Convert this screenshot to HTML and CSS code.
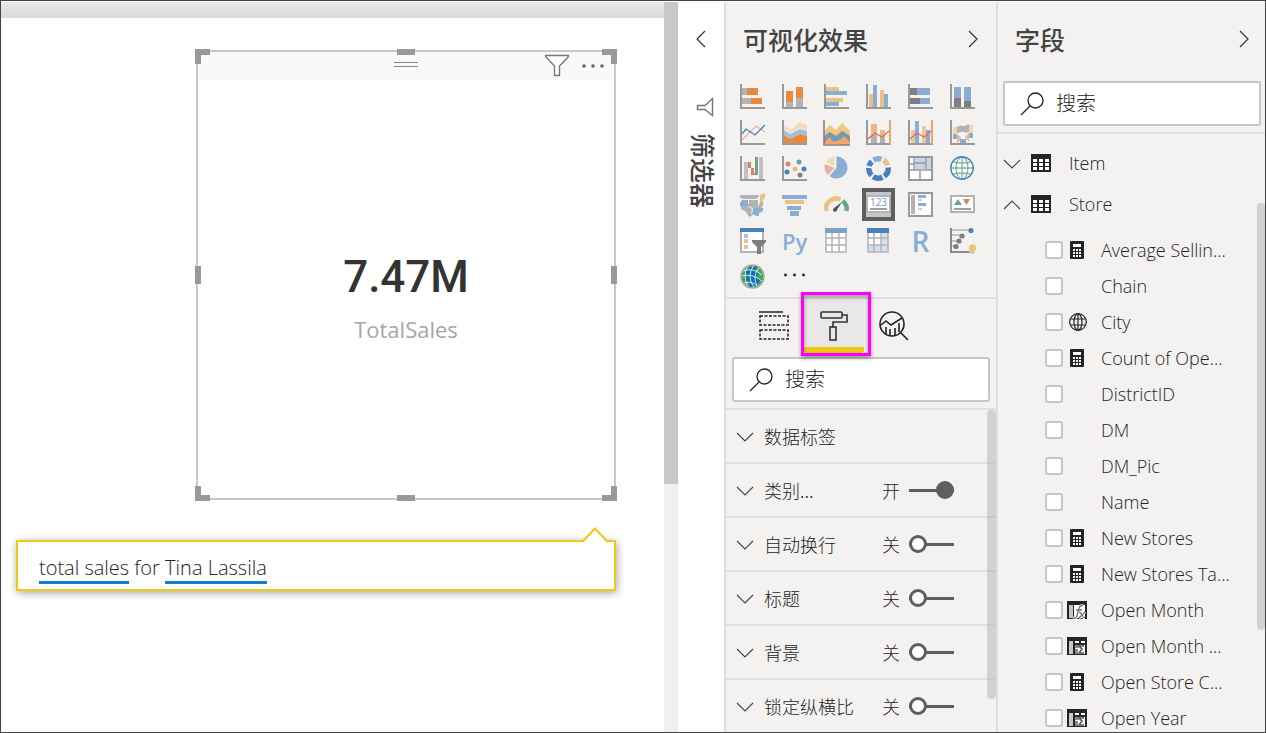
FILE: index.html
```html
<!DOCTYPE html>
<html lang="zh-CN">
<head>
<meta charset="utf-8">
<title>TotalSales</title>
<link rel="stylesheet" href="styles.css">
</head>
<body>
<svg class="defs" aria-hidden="true">
  <symbol id="axis" viewBox="0 0 25 25"><path d="M1 0V24H25" fill="none" stroke="#999" stroke-width="2"/></symbol>
  <symbol id="down" viewBox="0 0 18 18"><path d="M1 6l8 8 8-8" fill="none" stroke="#444" stroke-width="1.1"/></symbol>
  <symbol id="up" viewBox="0 0 18 18"><path d="M1 14l8-8 8 8" fill="none" stroke="#444" stroke-width="1.1"/></symbol>
  <symbol id="right" viewBox="0 0 10 18"><path d="M1 1l8 8-8 8" fill="none" stroke="#333" stroke-width="1.2"/></symbol>
  <symbol id="left" viewBox="0 0 10 18"><path d="M9 1L1 9l8 8" fill="none" stroke="#333" stroke-width="1.2"/></symbol>
  <symbol id="search" viewBox="0 0 24 24"><circle cx="15.500" cy="8.500" r="7.500" fill="none" stroke="#222" stroke-width="1.300"/><path d="M10 14L1 23" stroke="#222" stroke-width="1.300"/></symbol>
  <symbol id="table" viewBox="0 0 20 18"><path d="M0 0h20v18H0z" fill="#252423"/><path d="M2 5h4v3H2zM8 5h4v3H8zM14 5h4v3h-4zM2 9h4v3H2zM8 9h4v3H8zM14 9h4v3h-4zM2 13h4v3H2zM8 13h4v3H8zM14 13h4v3h-4z" fill="#fff"/></symbol>
  <symbol id="calc" viewBox="0 0 20 18"><rect x="3" width="14" height="18" rx="1" fill="#252423"/><path d="M6 3h8v3H6zM6 8h2v2H6zM9 8h2v2H9zM12 8h2v2h-2zM6 11h2v2H6zM9 11h2v2H9zM12 11h2v2h-2zM6 14h2v2H6zM9 14h2v2H9zM12 14h2v2h-2z" fill="#fff"/></symbol>
  <symbol id="globe" viewBox="0 0 20 18"><g fill="none" stroke="#252423" stroke-width="1.200"><circle cx="11" cy="9" r="8.300"/><ellipse cx="11" cy="9" rx="4" ry="8.300"/><path d="M11 1v16M4 6h14M4 12h14"/></g></symbol>
  <symbol id="fx" viewBox="0 0 20 18"><path d="M0 0h20v18H0z" fill="#252423"/><path d="M2 4h4v13H2z" fill="#c8c6c4"/><path d="M7 4h11v13H7z" fill="#fff"/><path d="M6 17c3 1 4-1 5-6s2-7 5-6M9 9h6M12 11c3 0 3 6 6 6M18 11l-6 6" fill="none" stroke="#fff" stroke-width="3"/><path d="M6 17c3 1 4-1 5-6s2-7 5-6M9 9h6M12 11c3 0 3 6 6 6M18 11l-6 6" fill="none" stroke="#777" stroke-width="1.300"/></symbol>
  <symbol id="sum" viewBox="0 0 20 18"><path d="M0 0h20v18H0z" fill="#252423"/><path d="M2 4h4v13H2z" fill="#c8c6c4"/><path d="M8 4h4v2H8zM14 4h4v2h-4zM8 8h10v9H8z" fill="#fff"/><path d="M8 8h4v3H8zM8 12h3v5H8z" fill="#8a8886"/><path d="M17 9h-5l3 3-3 4h5" fill="none" stroke="#555" stroke-width="1.500"/></symbol>
</svg>
<div class="app">
  <main class="report">
    <div class="ribbon"></div>
    <div class="page">
      <section class="visual" aria-label="TotalSales">
        <div class="visual-head">
          <svg class="grip" viewBox="0 0 24 6"><path d="M0 1.500h24M0 5.500h24" stroke="#8a8886"/></svg>
          <div class="visual-tools">
            <button class="plain" aria-label="筛选器"><svg width="26" height="24" viewBox="0 0 26 24"><path d="M1.500 1.500h23v1L15.500 12v9.500h-5V12L1.500 2.500z" fill="#fff" stroke="#777" stroke-width="1.400"/></svg></button>
            <button class="plain" aria-label="更多选项"><svg width="22" height="4" viewBox="0 0 22 4"><g fill="#666"><circle cx="2" cy="2" r="1.800"/><circle cx="11" cy="2" r="1.800"/><circle cx="20" cy="2" r="1.800"/></g></svg></button>
          </div>
        </div>
        <div class="card">
          <div class="card-value">7.47M</div>
          <div class="card-label">TotalSales</div>
        </div>
        <i class="handle corner tl"></i><i class="handle corner tr"></i><i class="handle corner bl"></i><i class="handle corner br"></i>
        <i class="handle t"></i><i class="handle b"></i><i class="handle l"></i><i class="handle r"></i>
      </section>
      <div class="question">
        <span class="term">total sales</span> for <span class="term">Tina Lassila</span>
        <svg class="pointer" viewBox="0 0 28 16"><path d="M2 16L14 2l12 14z" fill="#fff"/><path d="M1 14h1L14 1.500 26 14h1" fill="none" stroke="#f2c811" stroke-width="2"/></svg>
      </div>
    </div>
  </main>
  <div class="page-scroll"><div class="page-thumb"></div></div>

  <aside class="filters">
    <button class="plain" aria-label="展开"><svg width="10" height="18"><use href="#left"/></svg></button>
    <svg class="funnel" width="18" height="20" viewBox="0 0 18 20"><path d="M16.500 1.500v17L9 12.500H1.500v-4H9z" fill="none" stroke="#777" stroke-width="1.400"/></svg>
    <h2 class="filters-title">筛选器</h2>
  </aside>

  <aside class="pane viz">
    <header class="pane-head"><h2>可视化效果</h2><button class="plain" aria-label="折叠"><svg width="10" height="18"><use href="#right"/></svg></button></header>
    <div class="gallery">
      <button aria-label="堆积条形图"><svg viewBox="0 0 25 25"><path d="M2 4h5v7H2zM2 14h9v6H2z" fill="#b3b3b3"/><path d="M7 4h11v7H7zM11 14h11v6H11z" fill="#e68a41"/><use href="#axis"/></svg></button>
      <button aria-label="堆积柱形图"><svg viewBox="0 0 25 25"><path d="M4 18h7v5H4zM14 14h7v9h-7z" fill="#b3b3b3"/><path d="M4 7h7v11H4zM14 3h7v11h-7z" fill="#e68a41"/><use href="#axis"/></svg></button>
      <button aria-label="簇状条形图"><svg viewBox="0 0 25 25"><path d="M2 3h13v4H2zM2 14h17v4H2z" fill="#eac282"/><path d="M2 7h21v4H2zM2 18h13v4H2z" fill="#8aadd3"/><use href="#axis"/></svg></button>
      <button aria-label="簇状柱形图"><svg viewBox="0 0 25 25"><path d="M3 10h4v13H3zM14 6h4v17h-4z" fill="#eac282"/><path d="M7 1h4v22H7zM18 10h4v13h-4z" fill="#8aadd3"/><use href="#axis"/></svg></button>
      <button aria-label="百分比堆积条形图"><svg viewBox="0 0 25 25"><path d="M2 4h7v7H2zM2 14h10v6H2z" fill="#7f7f7f"/><path d="M9 4h13v7H9zM12 14h10v6H12z" fill="#8aadd3"/><use href="#axis"/></svg></button>
      <button aria-label="百分比堆积柱形图"><svg viewBox="0 0 25 25"><path d="M4 14h7v9H4zM14 17h7v6h-7z" fill="#7f7f7f"/><path d="M4 3h7v11H4zM14 3h7v14h-7z" fill="#8aadd3"/><use href="#axis"/></svg></button>

      <button aria-label="折线图"><svg viewBox="0 0 25 25"><g fill="none" stroke-width="1.300"><path d="M2 20L16 6l9 6" stroke="#eeb09f"/><path d="M2 14l4-5 9 6L25 5" stroke="#4a80bd"/></g><use href="#axis"/></svg></button>
      <button aria-label="分区图"><svg viewBox="0 0 25 25"><path d="M2 6l7 4 9-8 7 3v6l-7-3-9 5-7-4z" fill="#f2dcbc"/><path d="M2 10l6 4 10-5 7 2v5l-7-2-10 5-6-4z" fill="#a3c1d5"/><path d="M2 15l6 4 10-5 7 2v8H2z" fill="#e68a41"/><use href="#axis"/></svg></button>
      <button aria-label="堆积面积图"><svg viewBox="0 0 25 25"><path d="M0 11l6-6 6 5 6-7 8 8v13H0z" fill="#f1c67d"/><path d="M0 16l6-4 6 4 6-5 8 5v8H0z" fill="#7598b5"/><path d="M0 24l5-7 5 5 7-3 3-3 6 6v3z" fill="#f2a56a"/><path d="M0 0v25h26" fill="none" stroke="#7f7f7f" stroke-width="1.500"/></svg></button>
      <button aria-label="折线和堆积柱形图"><svg viewBox="0 0 25 25"><path d="M5 4h6v11H5zM14 10h5v7h-5z" fill="#efb48a"/><path d="M5 15h6v8H5zM14 17h5v6h-5z" fill="#b3b3b3"/><use href="#axis"/><path d="M24 0v24" stroke="#eba575" stroke-width="2"/><path d="M2 19l7-6 7 4 7-6" fill="none" stroke="#de6b52" stroke-width="1.400"/></svg></button>
      <button aria-label="折线和簇状柱形图"><svg viewBox="0 0 25 25"><path d="M3 10h4v13H3zM14 6h4v17h-4z" fill="#eac99a"/><path d="M7 1h4v22H7zM18 10h4v13h-4z" fill="#8aadd3"/><use href="#axis"/><path d="M24 0v24" stroke="#eba575" stroke-width="2"/><path d="M2 19l7-6 7 4 7-6" fill="none" stroke="#de6b52" stroke-width="1.400"/></svg></button>
      <button aria-label="功能区图表"><svg viewBox="0 0 25 25"><path d="M3 7h4v7H3zM19 5h4v8h-4z" fill="#f2d4ae"/><path d="M7 7l4-2v7l-4 1zM11 6h4v6h-4zM15 6l4-2v8l-4 1z" fill="#b3b3b3"/><path d="M7 14l4 3-2 5-2 1zM15 17l4-4v9l-2-2z" fill="#f1b78d"/><path d="M3 14h4v5H3zM19 13h4v5h-4zM10 19h6v4h-6z" fill="#8aadd3"/><path d="M7 16l4 3-4-1zM16 19l3-3v2z" fill="#a7c7e3"/><use href="#axis"/></svg></button>

      <button aria-label="瀑布图"><svg viewBox="0 0 25 25"><path d="M4 6h4v17H4zM19 1h4v22h-4z" fill="#c1c1c1"/><path d="M8 6h3v6H8zM11 12h3v7h-3zM14 17h2v2h-2z" fill="#df806d"/><path d="M15 1h3v18h-3z" fill="#6ba58b"/><use href="#axis"/></svg></button>
      <button aria-label="散点图"><svg viewBox="0 0 25 25"><circle cx="6" cy="8" r="2.500" fill="#df806d"/><circle cx="17" cy="6" r="2.500" fill="#6ba58b"/><circle cx="13" cy="13" r="2.500" fill="#e7ba6e"/><circle cx="5" cy="16" r="2.500" fill="#4a80bd"/><circle cx="22" cy="13" r="2.500" fill="#4a80bd"/><circle cx="18" cy="19" r="2.500" fill="#7f7f7f"/><use href="#axis"/></svg></button>
      <button aria-label="饼图"><svg viewBox="0 0 25 25"><path d="M12.500 0.500a11 11 0 1 1-7 19.500l7-8z" fill="#8aadd3"/><path d="M10.500 12l-6.500 7A11 11 0 0 1 1 8z" fill="#eeb09f"/><path d="M10.500 10L2 6a11 11 0 0 1 8.500-5.500z" fill="#f2dcb4"/></svg></button>
      <button aria-label="圆环图"><svg viewBox="0 0 25 25"><g fill="none" stroke-width="5.500"><path d="M7.500 4A9.700 9.700 0 0 1 15.500 3.200" stroke="#8aadd3"/><path d="M17.500 4.200A9.700 9.700 0 0 1 21.800 9.200" stroke="#eac282"/><path d="M22.200 11.500A9.700 9.700 0 0 1 18.300 20.300M16.500 21.300A9.700 9.700 0 0 1 7.200 20.600M5.500 19.300A9.700 9.700 0 0 1 2.800 12M3 10A9.700 9.700 0 0 1 5.800 5.500" stroke="#4a80bd"/></g></svg></button>
      <button aria-label="树状图"><svg viewBox="0 0 25 25"><path d="M1 1h23v23H1z" fill="#fff"/><path d="M7 2h11v11H7zM19 2h5v12h-5z" fill="#c3d5e8"/><path d="M1 1h23v23H1z" fill="none" stroke="#999" stroke-width="2"/><path d="M6 1v13M18 1v12M1 14h23M1 8h5M6 7h12M12 14v10" fill="none" stroke="#999" stroke-width="1.500"/></svg></button>
      <button aria-label="地图"><svg viewBox="0 0 25 25"><circle cx="12" cy="12" r="11" fill="#fff"/><g fill="none" stroke="#84b29d" stroke-width="1.300"><path d="M12 1v22M1 12h22M4 6q8 2 16 0M4 18q8-2 16 0"/><ellipse cx="12" cy="12" rx="6" ry="11"/></g><circle cx="12" cy="12" r="11.200" fill="none" stroke="#4a80bd" stroke-width="1.400"/></svg></button>

      <button aria-label="着色地图"><svg viewBox="0 0 25 25"><path d="M0 3h19l-1 3-4 1H4L0 6zM9 8h9v5l2 3h-8l-3-3zM1 14h7l4 3-1 4 2 2-4 2-3-5-5-3z" fill="#b3b3b3"/><path d="M2 8h6v4h2v2H0v-3zM13 16h10v3l-4 2v3h-2l-5-2z" fill="#8aadd3"/><path d="M20 3l5-2v4l-2 3v5h-3z" fill="#eac282"/><path d="M20 10h3v4l-2 2h-3z" fill="#b3b3b3"/></svg></button>
      <button aria-label="漏斗图"><svg viewBox="0 0 25 25"><path d="M0 3h25v4H0zM5 14h14v4H5zM8 19h9v5H8z" fill="#8aadd3"/><path d="M3 8h19v4H3z" fill="#eac282"/></svg></button>
      <button aria-label="仪表"><svg viewBox="0 0 25 25"><path d="M2.500 19A10 10 0 0 1 16.500 7.500" fill="none" stroke="#eac282" stroke-width="4.500"/><path d="M18.500 9a10 10 0 0 1 4 10" fill="none" stroke="#6ba58b" stroke-width="4.500"/><path d="M18 10l-8 6a2 2 0 1 0 3 2z" fill="#555"/></svg></button>
      <button class="selected" aria-label="卡片图"><svg viewBox="0 0 25 25"><path d="M1 4h23v16H1z" fill="#fff" stroke="#b3b3b3" stroke-width="2"/><text x="12.500" y="14" text-anchor="middle" class="mini">123</text><path d="M4 17h17" stroke="#7f7f7f" stroke-width="1.500"/></svg></button>
      <button aria-label="多行卡"><svg viewBox="0 0 25 25"><path d="M1 1h23v23H1z" fill="#fff" stroke="#999" stroke-width="2"/><path d="M3 3h4v19H3z" fill="#b3b3b3"/><path d="M10 3h8v3h-8zM10 11h8v3h-8z" fill="#8aadd3"/><path d="M10 7h4v2h-4zM10 16h4v2h-4z" fill="#d0d0d0"/></svg></button>
      <button aria-label="KPI"><svg viewBox="0 0 25 25"><path d="M1 4h23v16H1z" fill="#fff" stroke="#b3b3b3" stroke-width="2"/><path d="M4 13l4-6 4 6z" fill="#6ba58b"/><path d="M13 7h7l-3.500 6z" fill="#df806d"/><path d="M4 17h17" stroke="#7f7f7f" stroke-width="1.500"/></svg></button>

      <button aria-label="切片器"><svg viewBox="0 0 25 25"><path d="M1 1h22v23H1z" fill="#fff" stroke="#b3b3b3" stroke-width="2"/><path d="M0 0h24v4H0z" fill="#4a80bd"/><path d="M4 6h4v4H4z" fill="#a9c4df"/><path d="M4 11h4v4H4z" fill="#eac282"/><path d="M4 17h4v4H4z" fill="#eeb9af"/><path d="M12 12h14v2l-5 5v7h-4v-7l-5-5z" fill="#7f7f7f"/></svg></button>
      <button class="letters py" aria-label="Python 视觉对象">Py</button>
      <button aria-label="表"><svg viewBox="0 0 25 25"><path d="M2 1h20v23H2z" fill="#fff"/><path d="M2 4v20h20V4M2 10h20M2 17h20M8 4v20M15 4v20" fill="none" stroke="#b3b3b3" stroke-width="1.500"/><path d="M1 0h22v5H1z" fill="#7ba1cf"/></svg></button>
      <button aria-label="矩阵"><svg viewBox="0 0 25 25"><path d="M2 4h20v20H2z" fill="#d3e1ee"/><path d="M2 4h13v13H2z" fill="#fff"/><path d="M2 4v20h20V4M2 10h20M2 17h20M8 4v20M15 4v20" fill="none" stroke="#b3b3b3" stroke-width="1.500"/><path d="M1 0h22v5H1z" fill="#4a80bd"/></svg></button>
      <button class="letters r-script" aria-label="R 脚本视觉对象">R</button>
      <button aria-label="关键影响者"><svg viewBox="0 0 25 25"><path d="M1 0v24h20M1 2h20M1 7h9M1 13h7M1 18h4" fill="none" stroke="#b3b3b3" stroke-width="1.500"/><path d="M1 0v24h18" fill="none" stroke="#8a8a8a" stroke-width="2"/><circle cx="21" cy="2.500" r="2.600" fill="#4a80bd"/><g fill="#7f7f7f"><circle cx="12" cy="8" r="2.600"/><circle cx="9" cy="13" r="2.600"/><circle cx="6" cy="18.500" r="2.600"/></g><circle cx="22.500" cy="20" r="3.800" fill="#efc96f"/><path d="M20.500 23h4v3h-4z" fill="#c8c8c8"/></svg></button>

      <button aria-label="ArcGIS 地图"><svg viewBox="0 0 25 25"><circle cx="12.500" cy="12.500" r="11" fill="#3cae4e"/><path d="M8 4l9-2-2 5 4 2-3 5 5 1-4 6-7 3-1-6-5-2 4-4-4-3z" fill="#0f6fc0"/><g fill="none" stroke="#e6efe8" stroke-width="0.900"><path d="M3 7q10-4 19 4M1 12q11-3 21 5M4 19q8-3 14 4M8 2q-6 9 0 21M14 1q-8 11 0 23M19 4q-7 8-2 18"/></g><circle cx="12.500" cy="12.500" r="11.500" fill="none" stroke="#a8a8a8" stroke-width="1.500"/></svg></button>
      <button aria-label="更多视觉对象"><svg viewBox="0 0 25 25"><g fill="#222"><circle cx="3.500" cy="11" r="1.400"/><circle cx="12.500" cy="11" r="1.400"/><circle cx="21.500" cy="11" r="1.400"/></g></svg></button>
    </div>
    <nav class="tabs">
      <button aria-label="字段"><svg width="30" height="30" viewBox="0 0 30 30"><g fill="none" stroke="#222" stroke-width="1.500"><path d="M0 1h24"/><path d="M1 5h28v9H1zM1 19h28v9H1z" stroke-dasharray="3 1.500"/></g></svg></button>
      <button class="active" aria-label="格式"><svg width="28" height="30" viewBox="0 0 28 30"><g fill="none" stroke="#333" stroke-width="1.600"><rect x="1" y="1" width="21" height="6" rx="1"/><path d="M22 4h5v7H13v5"/><rect x="10" y="16" width="6" height="13"/></g></svg></button>
      <button aria-label="分析"><svg width="30" height="30" viewBox="0 0 30 30"><g fill="none" stroke="#222" stroke-width="1.600"><circle cx="13" cy="13" r="12"/><path d="M21.500 21.500L29 29M2 14l5-4 5 4L23 7M7 24v-8M11 24v-6M16 24v-7M20 21v-9"/></g></svg></button>
    </nav>
    <label class="search"><svg width="24" height="24"><use href="#search"/></svg><input type="text" placeholder="搜索" aria-label="搜索格式"></label>
    <div class="options">
      <div class="option"><svg class="chev"><use href="#down"/></svg><span>数据标签</span></div>
      <div class="option"><svg class="chev"><use href="#down"/></svg><span>类别...</span><label class="state">开<input type="checkbox" class="toggle" checked aria-label="类别"></label></div>
      <div class="option"><svg class="chev"><use href="#down"/></svg><span>自动换行</span><label class="state">关<input type="checkbox" class="toggle" aria-label="自动换行"></label></div>
      <div class="option"><svg class="chev"><use href="#down"/></svg><span>标题</span><label class="state">关<input type="checkbox" class="toggle" aria-label="标题"></label></div>
      <div class="option"><svg class="chev"><use href="#down"/></svg><span>背景</span><label class="state">关<input type="checkbox" class="toggle" aria-label="背景"></label></div>
      <div class="option"><svg class="chev"><use href="#down"/></svg><span>锁定纵横比</span><label class="state">关<input type="checkbox" class="toggle" aria-label="锁定纵横比"></label></div>
      <div class="thumb"></div>
    </div>
  </aside>

  <aside class="pane fields">
    <header class="pane-head"><h2>字段</h2><button class="plain" aria-label="折叠"><svg width="10" height="18"><use href="#right"/></svg></button></header>
    <label class="search"><svg width="24" height="24"><use href="#search"/></svg><input type="text" placeholder="搜索" aria-label="搜索字段"></label>
    <div class="tree">
      <div class="entity"><svg class="chev"><use href="#down"/></svg><svg class="ico"><use href="#table"/></svg><span>Item</span></div>
      <div class="entity"><svg class="chev"><use href="#up"/></svg><svg class="ico"><use href="#table"/></svg><span>Store</span></div>
      <div class="list">
        <label class="field"><input type="checkbox"><svg class="ico"><use href="#calc"/></svg><span>Average Sellin...</span></label>
        <label class="field"><input type="checkbox"><svg class="ico"></svg><span>Chain</span></label>
        <label class="field"><input type="checkbox"><svg class="ico"><use href="#globe"/></svg><span>City</span></label>
        <label class="field"><input type="checkbox"><svg class="ico"><use href="#calc"/></svg><span>Count of Ope...</span></label>
        <label class="field"><input type="checkbox"><svg class="ico"></svg><span>DistrictID</span></label>
        <label class="field"><input type="checkbox"><svg class="ico"></svg><span>DM</span></label>
        <label class="field"><input type="checkbox"><svg class="ico"></svg><span>DM_Pic</span></label>
        <label class="field"><input type="checkbox"><svg class="ico"></svg><span>Name</span></label>
        <label class="field"><input type="checkbox"><svg class="ico"><use href="#calc"/></svg><span>New Stores</span></label>
        <label class="field"><input type="checkbox"><svg class="ico"><use href="#calc"/></svg><span>New Stores Ta...</span></label>
        <label class="field"><input type="checkbox"><svg class="ico"><use href="#fx"/></svg><span>Open Month</span></label>
        <label class="field"><input type="checkbox"><svg class="ico"><use href="#sum"/></svg><span>Open Month ...</span></label>
        <label class="field"><input type="checkbox"><svg class="ico"><use href="#calc"/></svg><span>Open Store C...</span></label>
        <label class="field"><input type="checkbox"><svg class="ico"><use href="#sum"/></svg><span>Open Year</span></label>
      </div>
      <div class="thumb"></div>
    </div>
  </aside>
</div>
</body>
</html>
```
FILE: styles.css
```css
*, *::before, *::after { box-sizing: border-box; }
body { margin: 0; font-family: "Open Sans", "Noto Sans CJK SC", sans-serif; font-size: 18px; color: #252423; }
button, input { font: inherit; color: inherit; }
button { border: 0; padding: 0; background: none; }
h2 { margin: 0; font-size: 25px; font-weight: 500; line-height: 32px; color: #444; font-family: "Noto Sans CJK SC", sans-serif; }
svg { display: block; flex: none; }
.defs { position: absolute; width: 0; height: 0; }
.app { display: flex; height: 100vh; overflow: hidden; border: 1px solid #444; padding-top: 1px; background: #fff; }

.report { flex: 1; min-width: 0; }
.ribbon { height: 16px; background: linear-gradient(#ebe9ea, #d9d9d9); }
.page { padding: 32px 48px 0 15px; }
.visual { position: relative; display: flex; flex-direction: column; width: 420px; height: 450px; margin-left: auto; border: 2px solid #c8c8c8; }
.visual-head { display: flex; align-items: center; height: 28px; background: #f9f9f9; }
.grip { width: 24px; height: 6px; margin-left: auto; margin-bottom: 4px; }
.visual-tools { flex: 1; display: flex; align-items: center; justify-content: flex-end; gap: 12px; max-width: 196px; padding-right: 10px; }
.card { flex: 1; display: flex; flex-direction: column; align-items: center; justify-content: center; padding-top: 16px; }
.card-value { font: 500 44px/56px Roboto, sans-serif; color: #333; }
.card-label { font-size: 22px; line-height: 32px; margin-top: 8px; color: #a6a6a6; }
.handle { position: absolute; background: #999; }
.corner { width: 15px; height: 15px; background: none; border: 0 solid #999; }
.tl { left: -3px; top: -3px; border-width: 6px 0 0 6px; }
.tr { right: -3px; top: -3px; border-width: 6px 6px 0 0; }
.bl { left: -3px; bottom: -3px; border-width: 0 0 6px 6px; }
.br { right: -3px; bottom: -3px; border-width: 0 6px 6px 0; }
.t, .b { width: 18px; height: 6px; left: calc(50% - 9px); }
.l, .r { width: 6px; height: 18px; top: calc(50% - 9px); }
.t { top: -3px; } .b { bottom: -3px; } .l { left: -3px; } .r { right: -3px; }
.question { position: relative; margin-top: 40px; height: 51px; padding: 12px 21px 0; border: 2px solid #f2c811; font-size: 20px; font-weight: 300; line-height: 27px; box-shadow: 1px 2px 8px rgba(0,0,0,.35); }
.term { display: inline-block; border-bottom: 3px solid #0f7bd8; }
.pointer { position: absolute; right: 5px; top: -15px; width: 28px; height: 16px; }

.page-scroll { width: 14px; background: #f0f0f0; }
.page-thumb { height: 66%; background: #c8c8c8; }
.filters { width: 46px; display: flex; flex-direction: column; align-items: center; padding: 28px 0 0; }
.funnel { margin: 49px 0 16px 8px; }
.filters-title { writing-mode: vertical-rl; text-orientation: sideways; margin-left: 6px; }

.pane { display: flex; flex-direction: column; background: #f3f2f1; border-left: 2px solid #e1dfdd; }
.pane-head { display: flex; align-items: center; justify-content: space-between; padding: 21px 18px 0 17px; }
.viz { width: 272px; }
.fields { width: 269px; }
.fields .pane-head { padding-right: 16px; }
.gallery { display: grid; grid-template-columns: repeat(6, 33px); grid-auto-rows: 33px; gap: 3px 9px; padding: 25px 0 4px 10px; border-bottom: 2px solid #e1dfdd; }
.gallery button { display: grid; place-items: center; border: 4px solid transparent; }
.gallery svg { width: 25px; height: 25px; overflow: visible; }
.gallery .selected { border-color: #605e5c; background: #c8c6c4; }
.mini { font: 10px "Open Sans", sans-serif; fill: #6f9bcb; }
.gallery .letters { color: #8aadd3; font-weight: 600; line-height: 24px; }
.py { font-size: 22px; }
.r-script { font-size: 28px; }
.tabs { display: flex; height: 58px; padding-left: 18px; }
.tabs button { width: 60px; display: grid; place-items: center; padding-bottom: 4px; }
.tabs .active { position: relative; width: 60px; background: #eae8e6; border-bottom: 6px solid #f2c811; border-radius: 0 0 3px 3px; height: 54px; padding: 6px 0 0; }
.tabs .active::after { content: ""; position: absolute; inset: -7px -7px -9px -3px; border: 3px solid #f0f; box-shadow: 0 2px 4px rgba(0,0,0,.4), inset 0 2px 4px rgba(0,0,0,.4); }
.search { display: flex; align-items: center; gap: 12px; height: 45px; margin: 0 6px 6px; padding-left: 15px; background: #fff; border: 2px solid #c8c6c4; border-radius: 3px; }
.search input { flex: 1; min-width: 0; border: 0; outline: 0; padding: 0; background: none; font-size: 20px; font-weight: 300; }
.search input::placeholder { color: #252423; opacity: 1; }
.fields .search { margin: 26px 4px 6px 5px; }
.chev { width: 18px; height: 18px; }
.options, .tree { position: relative; flex: 1; min-height: 0; overflow: hidden; border-top: 2px solid #e1dfdd; }
.option { display: flex; align-items: center; gap: 10px; height: 54px; padding: 0 42px 0 10px; border-bottom: 2px solid #e1dfdd; font-family: "Noto Sans CJK SC", sans-serif; font-weight: 300; }
.state { display: flex; align-items: center; gap: 9px; margin-left: auto; }
.toggle { appearance: none; position: relative; width: 45px; height: 18px; margin: 0; background: linear-gradient(#605e5c, #605e5c) center / 100% 3px no-repeat; }
.toggle::before { content: ""; position: absolute; left: 0; top: 0; width: 18px; height: 18px; border: 3px solid #605e5c; border-radius: 50%; background: #fff; }
.toggle:checked::before { left: auto; right: 0; background: #605e5c; }
.thumb { position: absolute; right: 0; top: 0; width: 9px; height: 289px; border-radius: 4px; background: rgba(180,178,176,.5); }
.tree .thumb { top: 69px; width: 8px; height: 427px; }
.tree { padding-top: 8px; font-weight: 300; }
.entity { display: flex; align-items: center; height: 41px; padding-left: 5px; }
.entity .ico { margin: 0 18px 0 10px; }
.ico { width: 20px; height: 18px; }
.list { padding-top: 8px; }
.field { display: flex; align-items: center; height: 36px; padding-left: 47px; }
.field .ico { margin: 0 14px 0 4px; }
.field input { appearance: none; width: 18px; height: 18px; margin: 0; background: #fff; border: 2px solid #c8c6c4; border-radius: 3px; }
```
